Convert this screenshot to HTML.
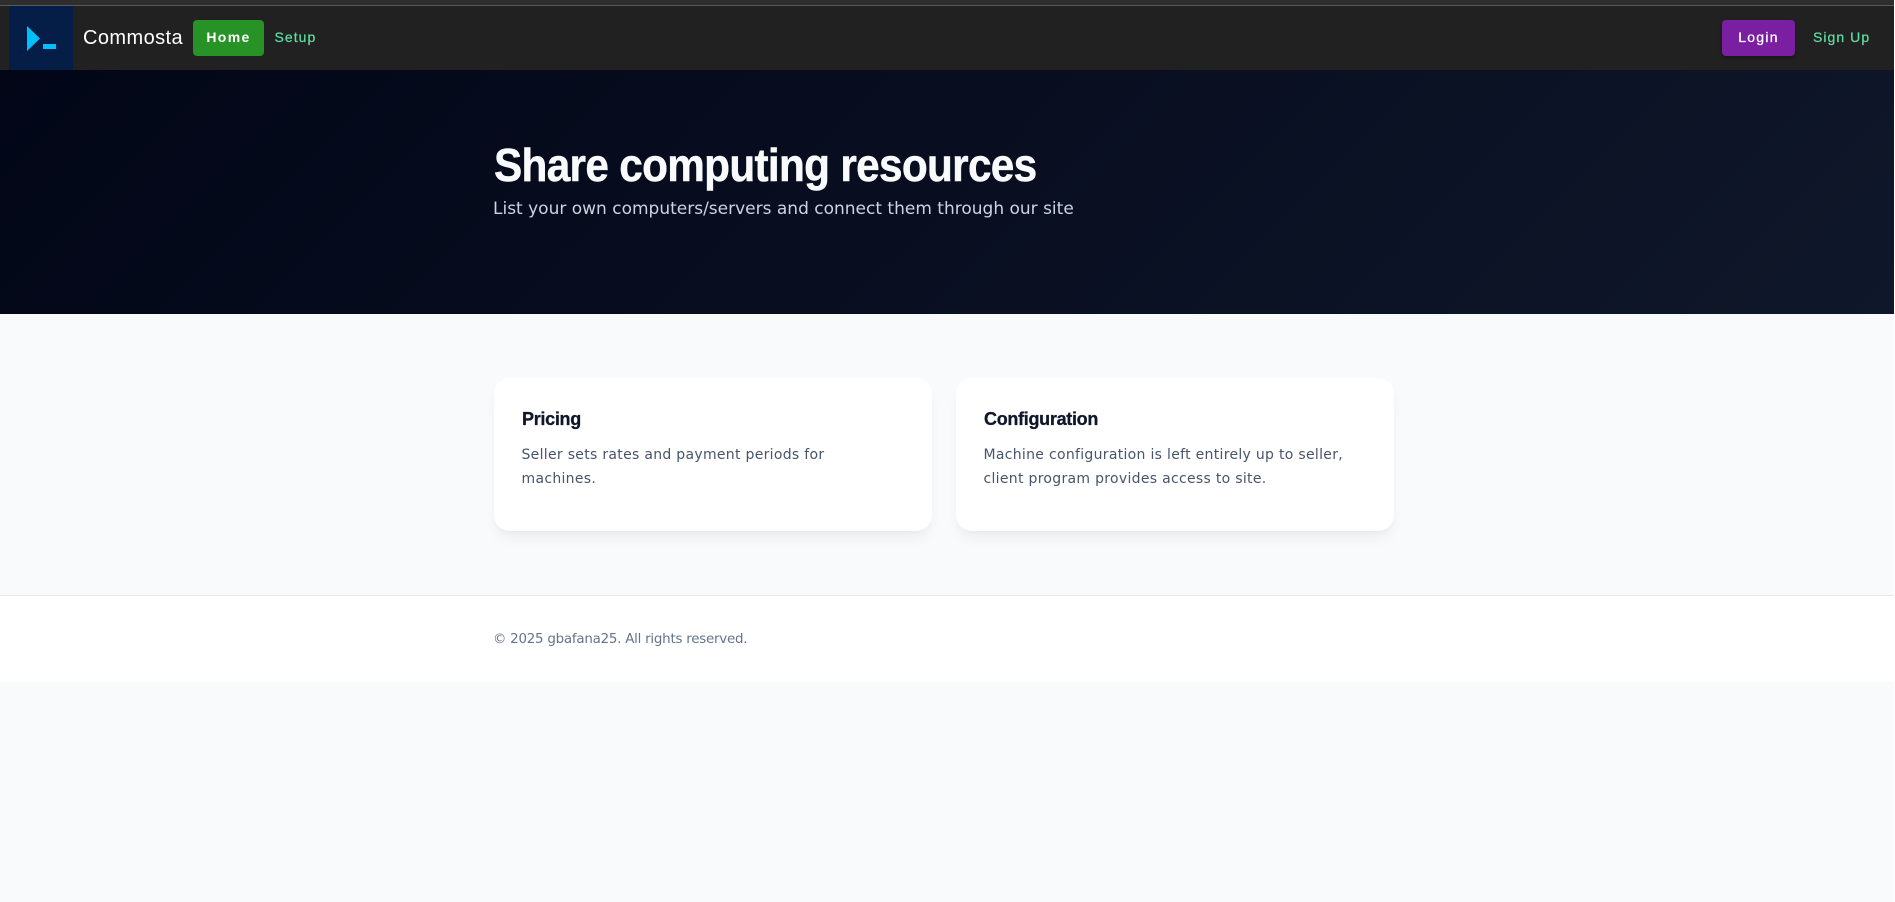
<!DOCTYPE html>
<html lang="en">
<head>
<meta charset="utf-8">
<title>Commosta</title>
<style>
*{box-sizing:border-box;margin:0;padding:0}
html,body{width:1895px;height:902px;overflow:hidden;background:#f8fafc}
body{position:relative;font-family:"DejaVu Sans","Liberation Sans",sans-serif}
div,a,h1,h2,p,svg{position:absolute;white-space:nowrap}
.r{font-family:"Liberation Sans",Arial,sans-serif}
.top{left:0;top:0;width:1895px;height:5px;background:#2e2e2e}
.line{left:0;top:5px;width:1895px;height:1px;background:#585858}
.nav{left:0;top:6px;width:1895px;height:64px;background:#212121}
.logo{left:9px;top:6px;width:64px;height:64px;background:#051e48}
.btn{height:36px;border-radius:4px;color:#fff;font-size:14px;line-height:35px;text-align:center;letter-spacing:1.25px}
.link{top:20px;height:36px;line-height:35px;color:#5fdba0;font-size:14px;letter-spacing:1.05px;-webkit-text-stroke:.25px #5fdba0}
.hero{left:0;top:70px;width:1895px;height:244px;background:linear-gradient(135deg,#020617 0%,#0f172a 100%)}
h1{left:494px;top:137px;font-size:46px;line-height:56px;font-weight:700;color:#f8fafc;letter-spacing:-.75px;-webkit-text-stroke:.5px #f8fafc;transform:scaleX(.92);transform-origin:0 50%}
.sub{left:493px;top:196px;font-size:17px;line-height:26px;color:#cbd5e1;letter-spacing:0}
.card{top:378px;width:438px;height:153px;background:#fff;border-radius:16px;box-shadow:0 10px 15px -3px rgba(0,0,0,.05),0 4px 6px -2px rgba(0,0,0,.03)}
h2{top:405px;font-size:18px;line-height:28px;font-weight:700;color:#0f172a;letter-spacing:-.3px;-webkit-text-stroke:.3px #0f172a}
.t{font-size:14px;line-height:24px;color:#475569;letter-spacing:.3px}
.foot{left:0;top:595px;width:1895px;height:87px;background:#fff;border-top:1px solid #e2e8f0}
.c{left:493px;top:630px;font-size:13.4px;line-height:20px;color:#64748b;letter-spacing:-.23px}
.edge{left:1894px;top:0;width:1px;height:902px;background:#fff}
</style>
</head>
<body>
<div class="top"></div>
<div class="line"></div>
<div class="nav"></div>
<div class="logo"></div>
<svg style="left:20px;top:20px" width="45" height="35" viewBox="0 0 45 35"><path d="M7 6L20 18.500L7 31Z" fill="#00bfff"/><rect x="23" y="24" width="13" height="5" fill="#00bfff"/></svg>
<div class="r" style="left:83px;top:24px;font-size:20px;line-height:28px;color:#fff;letter-spacing:.42px">Commosta</div>
<a class="btn r" style="left:193px;top:20px;width:71px;background:#279327;font-weight:700;letter-spacing:1.35px">Home</a>
<a class="link r" style="left:274.500px">Setup</a>
<a class="btn r" style="left:1722px;top:20px;width:73px;background:#7b1fa2;box-shadow:0 2px 3px rgba(0,0,0,.3);-webkit-text-stroke:.25px #fff">Login</a>
<a class="link r" style="left:1813px">Sign Up</a>
<div class="hero"></div>
<h1 class="r">Share computing resources</h1>
<p class="sub">List your own computers/servers and connect them through our site</p>
<div class="card" style="left:494px"></div>
<div class="card" style="left:956px"></div>
<h2 class="r" style="left:522px">Pricing</h2>
<p class="t" style="left:521.500px;top:443px">Seller sets rates and payment periods for</p>
<p class="t" style="left:521.500px;top:467px">machines.</p>
<h2 class="r" style="left:984px">Configuration</h2>
<p class="t" style="left:983.500px;top:443px">Machine configuration is left entirely up to seller,</p>
<p class="t" style="left:983.500px;top:467px">client program provides access to site.</p>
<div class="foot"></div>
<p class="c">© 2025 gbafana25. All rights reserved.</p>
<div class="edge"></div>
</body>
</html>
